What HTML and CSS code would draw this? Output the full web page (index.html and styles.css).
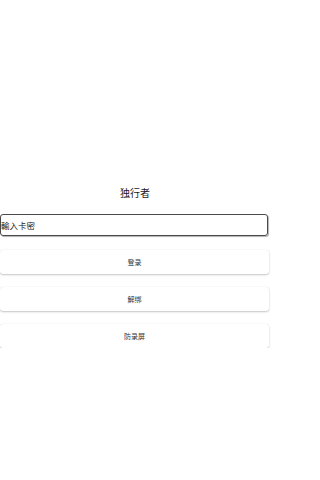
FILE: index.html
```html
<!DOCTYPE html>
<html lang="zh">
<head>
<meta charset="utf-8">
<link rel="stylesheet" href="styles.css">
</head>
<body>
<main class="page">
  <h1 class="title">独行者</h1>
  <div class="field"><span class="placeholder">輸入卡密</span></div>
  <div class="buttons">
    <button class="btn">登录</button>
    <button class="btn">解绑</button>
    <button class="btn">防录屏</button>
  </div>
</main>
</body>
</html>
```
FILE: styles.css
```css
html, body {
  margin: 0;
  padding: 0;
  background: #ffffff;
}
body {
  font-family: "Noto Sans CJK SC", "Noto Sans", sans-serif;
  color: #222;
}
.page {
  width: 270px;
  display: flex;
  flex-direction: column;
  padding-top: 186px;
}
.title {
  margin: 0;
  font-size: 10px;
  font-weight: 400;
  line-height: 14px;
  text-align: center;
  color: #1a1a1a;
}
.field {
  margin-top: 14px;
  width: 266px;
  height: 20px;
  border: 1px solid #4a4a4a;
  border-radius: 3px;
  box-shadow: 1px 1px 1px rgba(0,0,0,0.3);
  display: flex;
  align-items: center;
}
.placeholder {
  font-size: 8.5px;
  color: #222;
  line-height: 1;
}
.buttons {
  margin-top: 14px;
  display: flex;
  flex-direction: column;
  gap: 13px;
}
.btn {
  height: 24px;
  width: 269px;
  margin: 0;
  padding: 0;
  border: none;
  border-radius: 3px;
  background: #fff;
  box-shadow: 0 1px 2px rgba(0,0,0,0.22), 0 0 1px rgba(0,0,0,0.12);
  font-family: "Noto Sans CJK SC", "Noto Sans", sans-serif;
  font-size: 7px;
  color: #333;
}
```
